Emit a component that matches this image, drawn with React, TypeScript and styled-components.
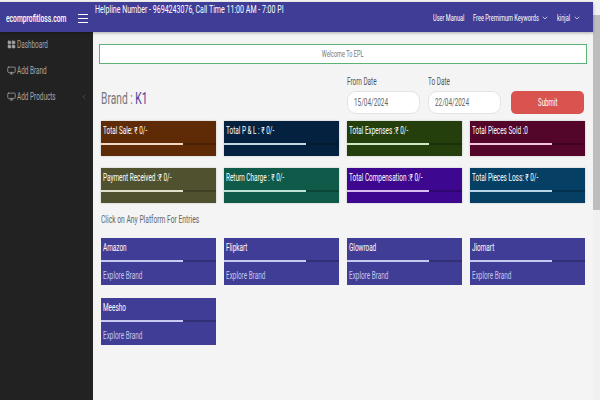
import React from "react";
import styled, { createGlobalStyle } from "styled-components";
import { ChevronDown, ChevronLeft, LayoutGrid, Monitor } from "lucide-react";

const GlobalStyle = createGlobalStyle`
  html, body {
    margin: 0;
    padding: 0;
    width: 600px;
    height: 400px;
    overflow: hidden;
    background: #f4f4f4;
    font-family: Roboto, sans-serif;
  }
  * { box-sizing: border-box; }
`;

const summary = [
  { label: "Total Sale: ₹ 0/-", bg: "#5f2a06", line: "#f3d9c5" },
  { label: "Total P & L : ₹ 0/-", bg: "#04223f", line: "#c5d5e2" },
  { label: "Total Expenses :₹ 0/-", bg: "#243f0c", line: "#d5e8c5" },
  { label: "Total Pieces Sold :0", bg: "#54052a", line: "#f3c5d8" },
  { label: "Payment Received :₹ 0/-", bg: "#50522f", line: "#dfe0cb" },
  { label: "Return Charge : ₹ 0/-", bg: "#0f5a48", line: "#bfe0d5" },
  { label: "Total Compensation :₹ 0/-", bg: "#3d078f", line: "#d8bdf0" },
  { label: "Total Pieces Loss: ₹ 0/-", bg: "#053f63", line: "#b9d5e8" },
];

const platforms = ["Amazon", "Flipkart", "Glowroad", "Jiomart", "Meesho"];

export default function App() {
  return (
    <Page>
      <GlobalStyle />
      <Main>
        <Header>
          <Logo>
            <LogoText>ecomprofitloss.com</LogoText>
            <Burger>
              <span />
              <span />
              <span />
            </Burger>
          </Logo>
          <Helpline>
            <Squeezed>Helpline Number - 9694243076, Call Time 11:00 AM - 7:00 PI</Squeezed>
          </Helpline>
          <TopNav>
            <Squeezed>User Manual</Squeezed>
            <NavDrop>
              <Squeezed>Free Premimum Keywords</Squeezed>
              <ChevronDown size={8} />
            </NavDrop>
            <NavDrop>
              <Squeezed>kinjal</Squeezed>
              <ChevronDown size={8} />
            </NavDrop>
          </TopNav>
        </Header>
        <Body>
          <Sidebar>
            <SideItem>
              <LayoutGrid size={9} fill="#a5a5a5" />
              <Squeezed>Dashboard</Squeezed>
            </SideItem>
            <SideItem>
              <Monitor size={9} />
              <Squeezed>Add Brand</Squeezed>
            </SideItem>
            <SideItem>
              <Monitor size={9} />
              <Squeezed>Add Products</Squeezed>
              <SideArrow>
                <ChevronLeft size={8} />
              </SideArrow>
            </SideItem>
          </Sidebar>
          <Content>
            <Welcome>
              <Centered>Welcome To EPL</Centered>
            </Welcome>
            <FilterRow>
              <BrandTitle>
                <Squeezed>
                  Brand : <BrandName>K1</BrandName>
                </Squeezed>
              </BrandTitle>
              <DateField>
                <DateLabel>
                  <Squeezed>From Date</Squeezed>
                </DateLabel>
                <DateInput>
                  <Squeezed>15/04/2024</Squeezed>
                </DateInput>
              </DateField>
              <DateField>
                <DateLabel>
                  <Squeezed>To Date</Squeezed>
                </DateLabel>
                <DateInput>
                  <Squeezed>22/04/2024</Squeezed>
                </DateInput>
              </DateField>
              <SubmitButton>
                <Centered>Submit</Centered>
              </SubmitButton>
            </FilterRow>
            <SummaryGrid>
              {summary.map((s) => (
                <SummaryCard key={s.label} $bg={s.bg}>
                  <CardTitle>
                    <Squeezed>{s.label}</Squeezed>
                  </CardTitle>
                  <Track>
                    <Bar $color={s.line} />
                  </Track>
                </SummaryCard>
              ))}
            </SummaryGrid>
            <SectionTitle>
              <Squeezed>Click on Any Platform For Entries</Squeezed>
            </SectionTitle>
            <PlatformGrid>
              {platforms.map((p) => (
                <PlatformCard key={p}>
                  <CardTitle>
                    <Squeezed>{p}</Squeezed>
                  </CardTitle>
                  <Track>
                    <Bar $color="#c9c8f2" />
                  </Track>
                  <Explore>
                    <Squeezed>Explore Brand</Squeezed>
                  </Explore>
                </PlatformCard>
              ))}
            </PlatformGrid>
          </Content>
        </Body>
      </Main>
      <Scrollbar>
        <ScrollThumb />
      </Scrollbar>
    </Page>
  );
}

// the whole reference is squashed sideways, so text gets narrowed too
const Squeezed = styled.span`
  display: inline-block;
  width: 0;
  white-space: nowrap;
  transform: scaleX(0.64);
  transform-origin: left center;
`;

const Centered = styled.span`
  display: inline-block;
  white-space: nowrap;
  transform: scaleX(0.62);
`;

const Page = styled.div`
  display: flex;
  width: 600px;
  height: 400px;
  overflow: hidden;
`;

const Main = styled.div`
  flex: 1;
  min-width: 0;
  display: flex;
  flex-direction: column;
`;

const Header = styled.header`
  height: 30px;
  margin-top: 2px;
  flex-shrink: 0;
  display: flex;
  position: relative;
  background: #3f3d96;
  color: #fff;
  box-shadow: 0 1px 3px rgba(0, 0, 0, 0.3);
`;

const Logo = styled.div`
  width: 93px;
  display: flex;
  align-items: center;
  justify-content: space-between;
  padding: 2px 5px 0 6px;
`;

const LogoText = styled(Squeezed)`
  font-size: 10.5px;
  font-weight: 500;
`;

const Burger = styled.div`
  display: flex;
  flex-direction: column;
  gap: 3px;
  width: 10px;

  span {
    height: 1px;
    background: #fff;
  }
`;

const Helpline = styled.div`
  width: 168px;
  padding: 1px 0 0 2px;
  font-size: 11px;
`;

const TopNav = styled.nav`
  margin-left: auto;
  display: grid;
  grid-template-columns: 40px 84px 32px;
  align-items: center;
  padding: 1px 4px 0 0;
  font-size: 8.8px;
`;

const NavDrop = styled.span`
  display: inline-flex;
  align-items: center;
  justify-content: space-between;
  padding-right: 8px;
`;

const Body = styled.div`
  flex: 1;
  min-height: 0;
  display: flex;
`;

const Sidebar = styled.aside`
  width: 93px;
  flex-shrink: 0;
  background: #222;
  display: flex;
  flex-direction: column;
  gap: 9px;
  padding: 4px 0 0 7px;
`;

const SideItem = styled.div`
  height: 17px;
  display: flex;
  align-items: center;
  gap: 1px;
  font-size: 10px;
  color: #a5a5a5;
`;

const SideArrow = styled.span`
  margin-left: auto;
  margin-right: 5px;
  display: flex;
  color: #555;
`;

const Content = styled.main`
  flex: 1;
  min-width: 0;
  padding: 12px 6px 0 6px;
  display: flex;
  flex-direction: column;
  background: #f4f4f4;
`;

const Welcome = styled.div`
  height: 20px;
  background: #fff;
  border: 1px solid #5cb176;
  display: flex;
  align-items: center;
  justify-content: center;
  font-size: 9px;
  color: #777;
`;

const FilterRow = styled.div`
  display: flex;
  align-items: flex-end;
  margin-top: 12px;
  padding: 0 3px 0 2px;
`;

const BrandTitle = styled.div`
  width: 246px;
  font-size: 16px;
  color: #777;
  padding-bottom: 6px;
`;

const BrandName = styled.span`
  color: #3f3d96;
`;

const DateField = styled.div`
  width: 81px;
  display: flex;
  flex-direction: column;
  gap: 4px;
`;

const DateLabel = styled.label`
  font-size: 10px;
  color: #555;
`;

const DateInput = styled.div`
  width: 73px;
  height: 23px;
  padding-left: 6px;
  display: flex;
  align-items: center;
  background: #fff;
  border: 1px solid #e4e4e4;
  border-radius: 9px;
  font-size: 10px;
  color: #666;
`;

const SubmitButton = styled.button`
  width: 73px;
  height: 23px;
  margin-left: 2px;
  padding: 0;
  border: none;
  border-radius: 5px;
  background: #d9534f;
  color: #fff;
  font: inherit;
  font-size: 10px;
`;

const SummaryGrid = styled.div`
  display: grid;
  grid-template-columns: repeat(4, 115px);
  gap: 12px 8px;
  margin-top: 7px;
  padding-left: 2px;
`;

const SummaryCard = styled.div<{ $bg: string }>`
  height: 35px;
  background: ${({ $bg }) => $bg};
  color: #fff;
  overflow: hidden;
  box-shadow: 0 0 2px rgba(0, 0, 0, 0.2);
`;

const CardTitle = styled.div`
  height: 22px;
  padding: 4px 0 0 2px;
  font-size: 10px;
  line-height: 12px;
`;

const Track = styled.div`
  height: 2px;
  background: rgba(0, 0, 0, 0.22);
`;

const Bar = styled.div<{ $color: string }>`
  width: 71%;
  height: 100%;
  background: ${({ $color }) => $color};
`;

const SectionTitle = styled.div`
  margin-top: 10px;
  padding-left: 2px;
  font-size: 10.5px;
  line-height: 14px;
  color: #666;
`;

const PlatformGrid = styled.div`
  display: grid;
  grid-template-columns: repeat(4, 115px);
  gap: 13px 8px;
  margin-top: 11px;
  padding-left: 2px;
`;

const PlatformCard = styled.div`
  height: 47px;
  background: #3f3d96;
  color: #fff;
  overflow: hidden;
`;

const Explore = styled.div`
  padding: 8px 0 0 2px;
  font-size: 10px;
  color: #c4c3ea;
`;

const Scrollbar = styled.div`
  width: 7px;
  flex-shrink: 0;
  padding-top: 15px;
  background: #f1f1f1;
`;

const ScrollThumb = styled.div`
  height: 195px;
  background: #bdbdbd;
`;
